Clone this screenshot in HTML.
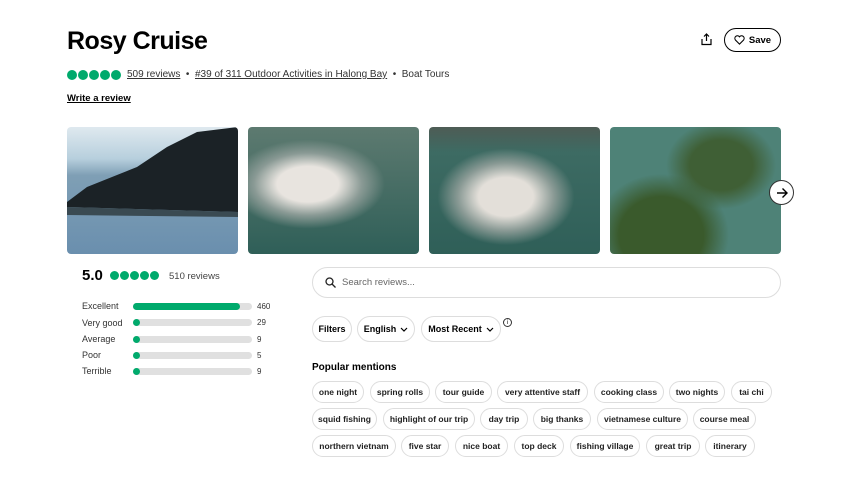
<!DOCTYPE html>
<html><head><style>
*{box-sizing:border-box;margin:0;padding:0}
body{width:848px;height:477px;background:#fff;font-family:"Liberation Sans",sans-serif;color:#000;position:relative;overflow:hidden}
.a{position:absolute}
.dots{display:flex;gap:1px}
.dots i{display:block;border-radius:50%;background:#00aa6c}
.bar{position:absolute;left:133px;width:119px;height:7px;border-radius:4px;background:#e0e0e0}
.bar b{display:block;height:7px;border-radius:4px;background:#00aa6c;width:7px}
.lbl{position:absolute;left:82px;font-size:9px;color:#333}
.cnt{position:absolute;left:257px;font-size:8px;color:#333}
.chip{position:absolute;height:22px;border:1px solid #ddd;border-radius:11px;font-size:8.5px;font-weight:bold;display:flex;align-items:center;justify-content:center;color:#222;white-space:nowrap}
.pill{position:absolute;top:316px;height:26px;border:1px solid #ddd;border-radius:13px;font-size:9px;font-weight:bold;display:flex;align-items:center;justify-content:center;gap:4px}
.ph{position:absolute;top:127px;width:171px;height:127px;border-radius:4px;overflow:hidden}
</style></head><body>
<div class="a" style="left:67px;top:27px;font-size:25px;font-weight:bold;letter-spacing:-0.5px">Rosy Cruise</div>
<div class="a dots" style="left:67px;top:70px"><i style="width:10px;height:10px"></i><i style="width:10px;height:10px"></i><i style="width:10px;height:10px"></i><i style="width:10px;height:10px"></i><i style="width:10px;height:10px"></i></div>
<div class="a" style="left:127px;top:69px;font-size:10px;color:#333;white-space:nowrap"><u>509 reviews</u> &nbsp;•&nbsp; <u>#39 of 311 Outdoor Activities in Halong Bay</u> &nbsp;•&nbsp; Boat Tours</div>
<div class="a" style="left:67px;top:93px;font-size:9.5px;font-weight:bold;text-decoration:underline">Write a review</div>
<svg class="a" style="left:700px;top:33px" width="13" height="13" viewBox="0 0 13 13" fill="none" stroke="#000" stroke-width="1.2"><path d="M6.5 1v7M4 3.5L6.5 1 9 3.5M2 6v5.5h9V6"/></svg>
<div class="a" style="left:724px;top:28px;width:57px;height:24px;border:1px solid #000;border-radius:12px;font-size:9.5px;font-weight:bold;display:flex;align-items:center;justify-content:center;gap:4px"><svg width="11" height="10" viewBox="0 0 12 11" fill="none" stroke="#000" stroke-width="1.2"><path d="M6 10L1.5 5.5A2.5 2.5 0 016 2a2.5 2.5 0 014.5 3.5z"/></svg>Save</div>

<div class="ph" style="left:67px;background:linear-gradient(180deg,#dfe9ef 0%,#b7cfdd 25%,#7f9fb5 38%,#6a8fae 100%)">
<svg width="171" height="127" style="position:absolute;left:0;top:0"><path d="M0 75 L20 60 L45 50 L70 40 L100 20 L130 5 L171 0 L171 85 L0 80Z" fill="#1b2226"/><path d="M0 80 L171 85 L171 90 L0 88Z" fill="#3a4a52"/></svg></div>
<div class="ph" style="left:248px;background:radial-gradient(ellipse 45% 35% at 35% 45%,#e8e4df 0 40%,#8a9a95 70%,transparent 100%),linear-gradient(#5d7a70,#2f5f58)"></div>
<div class="ph" style="left:429px;background:radial-gradient(ellipse 40% 38% at 45% 55%,#e3dfd9 0 40%,#8a9a95 70%,transparent 100%),linear-gradient(#4e5c55 0,#3d6b63 20%,#2f5f58)"></div>
<div class="ph" style="left:610px;background:radial-gradient(ellipse at 30% 85%,#3a5a2c 0 25%,transparent 40%),radial-gradient(ellipse at 65% 30%,#3f5f35 0 20%,transparent 35%),#4e8277"></div>
<div class="a" style="left:769px;top:180px;width:25px;height:25px;border-radius:50%;background:#fff;border:1px solid #333;display:flex;align-items:center;justify-content:center"><svg width="12" height="12" viewBox="0 0 12 12" fill="none" stroke="#000" stroke-width="1.4"><path d="M1 6h10M6.5 1.5L11 6l-4.5 4.5"/></svg></div>

<div class="a" style="left:82px;top:267px;font-size:15px;font-weight:bold">5.0</div>
<div class="a dots" style="left:110px;top:271px"><i style="width:9px;height:9px"></i><i style="width:9px;height:9px"></i><i style="width:9px;height:9px"></i><i style="width:9px;height:9px"></i><i style="width:9px;height:9px"></i></div>
<div class="a" style="left:169px;top:271px;font-size:9.5px;color:#444">510 reviews</div>
<div class="lbl" style="top:301px">Excellent</div><div class="bar" style="top:303px"><b style="width:107px"></b></div><div class="cnt" style="top:302px">460</div>
<div class="lbl" style="top:318px">Very good</div><div class="bar" style="top:319px"><b></b></div><div class="cnt" style="top:318px">29</div>
<div class="lbl" style="top:334px">Average</div><div class="bar" style="top:336px"><b></b></div><div class="cnt" style="top:335px">9</div>
<div class="lbl" style="top:350px">Poor</div><div class="bar" style="top:352px"><b></b></div><div class="cnt" style="top:351px">5</div>
<div class="lbl" style="top:366px">Terrible</div><div class="bar" style="top:368px"><b></b></div><div class="cnt" style="top:367px">9</div>

<div class="a" style="left:312px;top:267px;width:469px;height:31px;border:1px solid #ddd;border-radius:16px;display:flex;align-items:center;padding-left:12px;gap:6px;font-size:9.5px;color:#666"><svg width="11" height="11" viewBox="0 0 11 11" fill="none" stroke="#222" stroke-width="1.3"><circle cx="4.5" cy="4.5" r="3.5"/><path d="M7 7l3.5 3.5"/></svg>Search reviews...</div>
<div class="pill" style="left:312px;width:40px">Filters</div>
<div class="pill" style="left:357px;width:58px">English <svg width="8" height="5" viewBox="0 0 8 5" fill="none" stroke="#000" stroke-width="1.2"><path d="M1 1l3 3 3-3"/></svg></div>
<div class="pill" style="left:421px;width:80px">Most Recent <svg width="8" height="5" viewBox="0 0 8 5" fill="none" stroke="#000" stroke-width="1.2"><path d="M1 1l3 3 3-3"/></svg></div>
<div class="a" style="left:503px;top:318px;width:9px;height:9px;border:1px solid #333;border-radius:50%;font-size:6px;text-align:center;line-height:8px">i</div>
<div class="a" style="left:312px;top:362px;font-size:10px;font-weight:bold">Popular mentions</div>

<div class="chip" style="top:381px;left:312px;width:52px">one night</div>
<div class="chip" style="top:381px;left:370px;width:60px">spring rolls</div>
<div class="chip" style="top:381px;left:435px;width:57px">tour guide</div>
<div class="chip" style="top:381px;left:497px;width:91px">very attentive staff</div>
<div class="chip" style="top:381px;left:594px;width:70px">cooking class</div>
<div class="chip" style="top:381px;left:669px;width:56px">two nights</div>
<div class="chip" style="top:381px;left:731px;width:41px">tai chi</div>
<div class="chip" style="top:408px;left:312px;width:65px">squid fishing</div>
<div class="chip" style="top:408px;left:383px;width:92px">highlight of our trip</div>
<div class="chip" style="top:408px;left:480px;width:48px">day trip</div>
<div class="chip" style="top:408px;left:533px;width:58px">big thanks</div>
<div class="chip" style="top:408px;left:597px;width:91px">vietnamese culture</div>
<div class="chip" style="top:408px;left:693px;width:63px">course meal</div>
<div class="chip" style="top:435px;left:312px;width:84px">northern vietnam</div>
<div class="chip" style="top:435px;left:401px;width:48px">five star</div>
<div class="chip" style="top:435px;left:455px;width:53px">nice boat</div>
<div class="chip" style="top:435px;left:514px;width:50px">top deck</div>
<div class="chip" style="top:435px;left:570px;width:70px">fishing village</div>
<div class="chip" style="top:435px;left:646px;width:54px">great trip</div>
<div class="chip" style="top:435px;left:705px;width:50px">itinerary</div>
</body></html>
